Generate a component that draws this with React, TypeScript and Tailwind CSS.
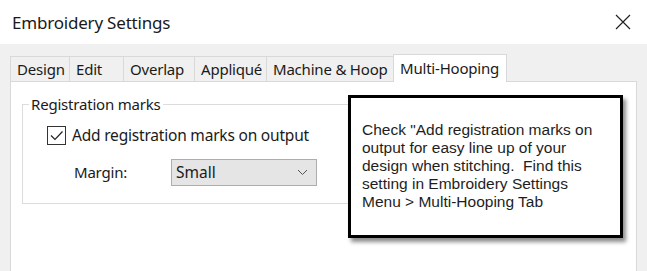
const tabs = [
  { label: "Design", w: "w-[59px]" },
  { label: "Edit", w: "w-[54px]" },
  { label: "Overlap", w: "w-[71px]" },
  { label: "Appliqué", w: "w-[72px]" },
  { label: "Machine & Hoop", w: "w-[127px]" },
];

export default function App() {
  return (
    <div className="relative flex h-[271px] w-[647px] flex-col overflow-hidden bg-white font-['Noto_Sans',sans-serif] text-[#1a1a1a]">
      {/* Title bar */}
      <div className="flex h-[44px] shrink-0 items-center justify-between pl-[12px] pr-[16px]">
        <span className="text-[17px] leading-none tracking-[-0.2px]">Embroidery Settings</span>
        <svg width="16" height="16" viewBox="0 0 16 16" className="text-[#222]">
          <path d="M1 1 L15 15 M15 1 L1 15" stroke="currentColor" strokeWidth="1.2" />
        </svg>
      </div>

      {/* Dialog body */}
      <div className="flex flex-1 flex-col bg-[#f0f0f0] pl-[10px] pr-[10px] pt-[10px]">
        <div className="flex h-[27px] items-end">
          {tabs.map((t) => (
            <div
              key={t.label}
              className={`flex h-[25px] items-center border border-b-0 border-r-0 border-[#d9d9d9] bg-[#f0f0f0] pl-[6px] text-[15px] leading-none tracking-[-0.2px] ${t.w}`}
            >
              {t.label}
            </div>
          ))}
          <div className="relative top-[1px] flex h-[28px] w-[114px] items-center border border-b-0 border-[#d9d9d9] bg-white pl-[6px] text-[15px] leading-none tracking-[-0.2px]">
            Multi-Hooping
          </div>
        </div>

        <div className="flex-1 border border-b-0 border-[#d9d9d9] bg-white pl-[11px] pt-[13px]">
          <fieldset className="h-[109px] w-[580px] border border-[#dcdcdc] pl-[6px]">
            <legend className="px-[2px] text-[15px] leading-[18px] tracking-[-0.2px]">Registration marks</legend>
            <div className="pl-[18px] pt-[13px]">
              <label className="flex items-center gap-[6px] text-[15.5px] leading-none tracking-[-0.2px]">
                <span className="flex h-[19px] w-[19px] items-center justify-center border border-[#333] bg-white">
                  <svg width="15" height="15" viewBox="0 0 15 15">
                    <path d="M2 7.5 L6 11.5 L13.5 3.5" fill="none" stroke="#222" strokeWidth="1.2" />
                  </svg>
                </span>
                Add registration marks on output
              </label>
              <div className="mt-[14px] flex items-center pl-[27px]">
                <span className="w-[97px] text-[15px] leading-none tracking-[-0.2px]">Margin:</span>
                <div className="flex h-[27px] w-[146px] items-center justify-between border border-[#adadad] bg-[#e5e5e5] pl-[4px] pr-[8px] text-[15.5px] leading-none">
                  Small
                  <svg width="11" height="7" viewBox="0 0 11 7">
                    <path d="M1 1 L5.5 5.5 L10 1" fill="none" stroke="#555" strokeWidth="1" />
                  </svg>
                </div>
              </div>
            </div>
          </fieldset>
        </div>
      </div>

      {/* Callout */}
      <div className="absolute left-[348px] top-[95px] h-[143px] w-[275px] border-[3px] border-black bg-white pl-[11px] pr-[18px] pt-[23px] font-['Liberation_Sans',Arial,sans-serif] text-[15.5px] leading-[18px] text-[#1e1e1e] shadow-[3px_4px_4px_rgba(0,0,0,0.45)]">
        Check "Add registration marks on output for easy line up of your design when stitching.&nbsp; Find this setting in Embroidery Settings Menu &gt; Multi-Hooping Tab
      </div>
    </div>
  );
}
